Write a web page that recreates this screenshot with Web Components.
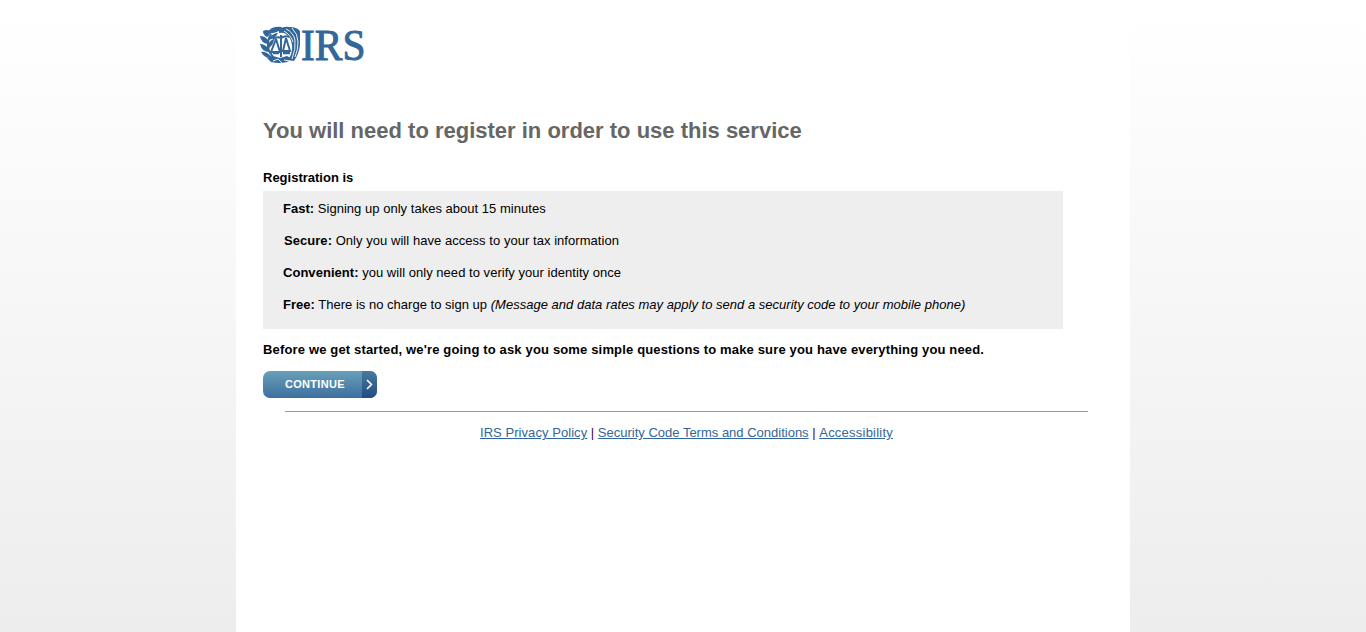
<!DOCTYPE html>
<html lang="en">
<head>
<meta charset="utf-8">
<title>IRS Registration</title>
<style>
html,body{margin:0;height:100%}
body{background:linear-gradient(#fff 10px,#ededed) no-repeat #ededed;overflow:hidden;font:13px/16px "Liberation Sans",Arial,sans-serif;color:#000}
</style>
</head>
<body>
<irs-page>
  <irs-logo></irs-logo>
  <page-title>You will need to register in order to use this service</page-title>
  <lead-text>Registration is</lead-text>
  <info-panel>
    <info-item label="Fast:" style="letter-spacing:.025px">Signing up only takes about 15 minutes</info-item>
    <info-item label="Secure:" style="padding-left:1px;letter-spacing:.045px">Only you will have access to your tax information</info-item>
    <info-item label="Convenient:" style="letter-spacing:.035px">you will only need to verify your identity once</info-item>
    <info-item label="Free:" style="letter-spacing:.015px">There is no charge to sign up <i>(Message and data rates may apply to send a security code to your mobile phone)</i></info-item>
  </info-panel>
  <lead-text style="letter-spacing:.157px">Before we get started, we're going to ask you some simple questions to make sure you have everything you need.</lead-text>
  <action-button>CONTINUE</action-button>
  <page-footer></page-footer>
</irs-page>
<script>
function define(name, html) {
  const t = document.createElement('template');
  t.innerHTML = html;
  customElements.define(name, class extends HTMLElement {
    constructor() {
      super();
      this.attachShadow({mode: 'open'}).append(t.content.cloneNode(true));
    }
    connectedCallback() {
      const l = this.shadowRoot.querySelector('[data-label]');
      if (l) l.textContent = this.getAttribute('label');
    }
  });
}
define('irs-page', `<style>
:host{display:block;box-sizing:border-box;width:894px;height:100vh;margin:0 auto;padding:25px 27px 0;background:#fff}
</style><slot></slot>`);
define('irs-logo', `<style>
:host{display:block;margin-left:-4px;height:40px}svg{display:block;overflow:visible}
text{font:45px/50px "Liberation Serif","Times New Roman",serif;fill:#336699;stroke:#336699;stroke-width:1}
</style>
<svg width="112" height="40" viewBox="0 0 112 40">
<g fill="#336699">
<path d="M13 3Q18 1 23 2Q21 7 14 8L9 9Q9 5 13 3"/>
<path d="M4 6Q8 4 11 6Q11 11 8 12Q4 10 4 6"/>
<path d="M1 11Q6 11 9 15L9 19Q2 18 1 11"/>
<path d="M1 19Q6 19 10 24L10 27Q3 27 1 19"/>
<path d="M2 27Q7 26 13 32Q7 35 2 27"/>
<path d="M11 12Q15 8 19 8Q17 13 10 15"/>
<path d="M9 20Q11 15 15 14Q15 19 10 23"/>
<path d="M8 33L14 31L21 33L28 31L34 34L28 37Q20 39 12 37Z"/>
<path d="M20 5Q24 1 30 2Q38 2 41 6V20Q40 29 35 36L29 35Q34 28 33 20Q32 12 27 9Q24 7 20 8Z"/>
</g>
<g fill="none" stroke="#336699" stroke-width="2">
<path d="M12 9Q7 17 10 26L14 32"/>
<path d="M14 14Q18 11 22 13Q26 10 31 12M22 10V32M17 14L12 27H21L17 14M27 13L24 26H31L27 13"/>
<path d="M14 28H20M24 28H31" stroke-width="2.4"/>
</g>
<g fill="none" stroke="#fff" stroke-width=".9">
<path d="M27 4Q34 7 36 15Q37 24 33 34M33 3Q39 9 39 17Q39 25 36 32M25 6Q32 10 34 17M14 36L19 34L23 38M25 35L31 36"/>
</g>
<text x="42" y="34.5" textLength="64.5" lengthAdjust="spacingAndGlyphs">IRS</text>
</svg>`);
define('page-title', `<style>
:host{display:block;margin-top:53px;height:26px;font-size:22px;line-height:26px;font-weight:bold;color:#666;white-space:nowrap}
</style><slot></slot>`);
define('lead-text', `<style>:host{display:block;font-weight:bold;margin-top:26px;white-space:nowrap}</style><slot></slot>`);
define('info-panel', `<style>
:host{display:flex;flex-direction:column;gap:16px;box-sizing:border-box;width:800px;height:138px;margin:5px 0 -13px;padding:10px 20px;background:#eee}
</style><slot></slot>`);
define('info-item', `<style>:host{display:block;white-space:nowrap}</style><b data-label></b> <slot></slot>`);
define('action-button', `<style>
:host{display:flex;width:114px;height:27px;margin-top:13px;border-radius:7px;overflow:hidden;background:linear-gradient(#69a0b8,#3d6f9f);color:#fff;font-size:11px;font-weight:bold;line-height:27px;letter-spacing:.3px}
span{width:77px;padding-left:22px}
i{display:flex;align-items:center;justify-content:center;width:15px;background:linear-gradient(#487aa0,#214c84)}
</style><span><slot></slot></span><i><svg width="7" height="11" viewBox="0 0 7 11"><path d="M1 1L5.5 5.5L1 10" fill="none" stroke="#fff" stroke-width="1.6"/></svg></i>`);
define('page-footer', `<style>
:host{display:block;width:803px;margin:13px 0 0 22px;border-top:1px solid #999;padding-top:13px;text-align:center;color:#404;white-space:nowrap}
a{color:#336699;text-decoration:underline}
</style><a href="#" style="letter-spacing:.06px">IRS Privacy Policy</a> | <a href="#">Security Code Terms and Conditions</a> | <a href="#" style="letter-spacing:.23px">Accessibility</a>`);
</script>
</body>
</html>
